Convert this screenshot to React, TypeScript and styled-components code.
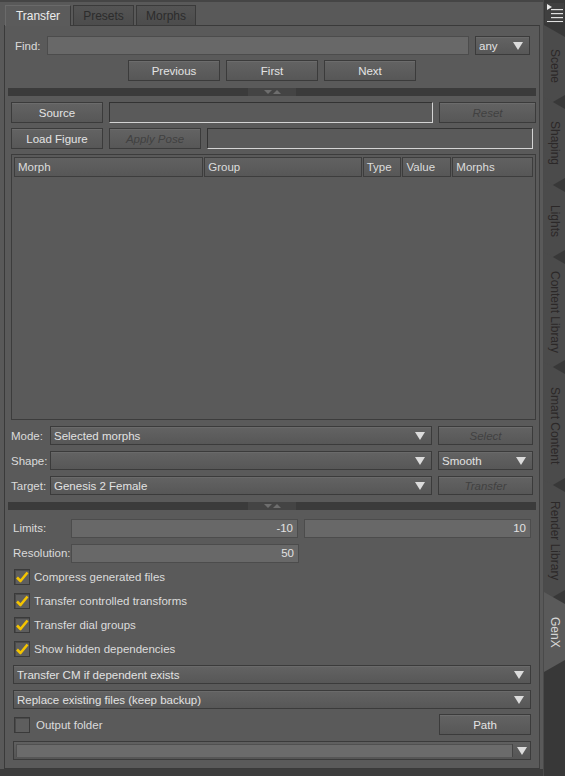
import type { FC } from 'react'
import styled, { createGlobalStyle, css } from 'styled-components'

const GlobalStyle = createGlobalStyle`
  html, body {
    margin: 0;
    padding: 0;
    background: #3c3c3c;
  }
  body {
    font-family: 'Liberation Sans', Arial, sans-serif;
    font-size: 11px;
    color: #dedede;
  }
`

const Frame = styled.div`
  display: flex;
  width: 565px;
  height: 776px;
  background: #3c3c3c;
  overflow: hidden;
`

const Main = styled.div`
  width: 543px;
  height: 769px;
  background: #595959;
  border-top: 2px solid #454545;
  box-sizing: border-box;
  padding: 3px 3px 0 4px;
  display: flex;
  flex-direction: column;
`

const TabBar = styled.div`
  display: flex;
  gap: 2px;
  padding-left: 1px;
  height: 20px;
  position: relative;
  z-index: 1;
`

const Tab = styled.div<{ $active?: boolean; $w: number }>`
  width: ${(p) => p.$w}px;
  height: 20px;
  box-sizing: border-box;
  display: flex;
  align-items: center;
  justify-content: center;
  font-size: 12px;
  border: 1px solid #3a3a3a;
  border-bottom: none;
  ${(p) =>
    p.$active
      ? css`
          background: #5b5b5b;
          color: #ececec;
          height: 21px;
          border-top-color: #6a6a6a;
          border-left-color: #6a6a6a;
        `
      : css`
          background: linear-gradient(#545454, #4c4c4c);
          color: #2c2c2c;
        `}
`

const Panel = styled.div`
  flex: 1;
  border: 1px solid #3a3a3a;
  border-right-color: #3f3f3f;
  background: #5a5a5a;
  display: flex;
  flex-direction: column;
  padding-top: 10px;
`

const Row = styled.div<{ $pl?: number; $pr?: number; $mt?: number; $h?: number }>`
  display: flex;
  align-items: center;
  gap: 6px;
  padding-left: ${(p) => p.$pl ?? 6}px;
  padding-right: ${(p) => p.$pr ?? 3}px;
  margin-top: ${(p) => p.$mt ?? 0}px;
  height: ${(p) => p.$h ?? 21}px;
`

const CenterRow = styled(Row)`
  justify-content: center;
`

const Label = styled.span<{ $w?: number; $grow?: boolean }>`
  color: #dadada;
  font-size: 11.5px;
  width: ${(p) => (p.$w ? `${p.$w}px` : 'auto')};
  flex: ${(p) => (p.$grow ? 1 : '0 0 auto')};
  white-space: nowrap;
`

const Input = styled.div<{ $w?: number; $align?: string }>`
  height: 19px;
  box-sizing: border-box;
  background: #686868;
  border: 1px solid #4c4c4c;
  ${(p) => (p.$w ? `width: ${p.$w}px;` : 'flex: 1;')}
  display: flex;
  align-items: center;
  justify-content: ${(p) => p.$align ?? 'flex-start'};
  padding: 0 4px;
  font-size: 11.5px;
  color: #e2e2e2;
`

const Sunken = styled.div<{ $w?: number }>`
  height: 21px;
  box-sizing: border-box;
  ${(p) => (p.$w ? `width: ${p.$w}px;` : 'flex: 1;')}
  background: #5a5a5a;
  border: 1px solid #333;
  border-right-color: #d4d4d4;
  border-bottom-color: #d4d4d4;
`

const Button = styled.div<{ $w?: number; $disabled?: boolean; $h?: number }>`
  width: ${(p) => p.$w ?? 92}px;
  height: ${(p) => p.$h ?? 21}px;
  flex-shrink: 0;
  box-sizing: border-box;
  border: 1px solid #3b3b3b;
  background: linear-gradient(#636363, #575757);
  box-shadow: inset 0 1px 0 #6c6c6c;
  display: flex;
  align-items: center;
  justify-content: center;
  font-size: 11.5px;
  color: ${(p) => (p.$disabled ? '#414141' : '#e4e4e4')};
  font-style: ${(p) => (p.$disabled ? 'italic' : 'normal')};
`

const Combo = styled.div<{ $w?: number; $h?: number }>`
  height: ${(p) => p.$h ?? 19}px;
  box-sizing: border-box;
  ${(p) => (p.$w ? `width: ${p.$w}px; flex-shrink: 0;` : 'flex: 1;')}
  border: 1px solid #3b3b3b;
  background: linear-gradient(#636363, #575757);
  box-shadow: inset 0 1px 0 #6a6a6a;
  display: flex;
  align-items: center;
  padding: 0 6px 0 3px;
  font-size: 11.5px;
  color: #e2e2e2;
`

const ComboText = styled.span`
  flex: 1;
  white-space: nowrap;
  overflow: hidden;
`

const Arrow = styled.span`
  width: 0;
  height: 0;
  border-left: 5px solid transparent;
  border-right: 5px solid transparent;
  border-top: 8px solid #dcdcdc;
  flex-shrink: 0;
`

const PathCombo = styled.div`
  flex: 1;
  height: 19px;
  box-sizing: border-box;
  border: 1px solid #3b3b3b;
  background: linear-gradient(#606060, #555);
  display: flex;
  align-items: stretch;
  padding: 2px 0 2px 2px;
`

const PathField = styled.div`
  flex: 1;
  background: #6b6b6b;
  border-top: 1px solid #505050;
  border-left: 1px solid #505050;
`

const PathArrowBox = styled.div`
  width: 17px;
  display: flex;
  align-items: center;
  justify-content: center;
  border-left: 1px solid #444;
`

const Splitter = styled.div<{ $mt: number }>`
  margin: ${(p) => p.$mt}px 3px 0 3px;
  height: 8px;
  background: #3b3b3b;
  display: flex;
  justify-content: center;
`

const Grip = styled.div`
  width: 48px;
  background: #444;
  display: flex;
  align-items: center;
  justify-content: center;
  gap: 1px;
`

const GripTri = styled.span<{ $up?: boolean }>`
  width: 0;
  height: 0;
  border-left: 4px solid transparent;
  border-right: 4px solid transparent;
  ${(p) => (p.$up ? 'border-bottom: 4px solid #6e6e6e;' : 'border-top: 4px solid #6e6e6e;')}
`

const Table = styled.div`
  margin: 5px 3px 0 6px;
  height: 266px;
  box-sizing: border-box;
  border: 1px solid #3c3c3c;
  background: #5a5a5a;
  padding: 2px;
`

const HeaderRow = styled.div`
  display: flex;
  height: 20px;
  gap: 1px;
`

const HeaderCell = styled.div<{ $w: number }>`
  width: ${(p) => p.$w}px;
  box-sizing: border-box;
  border: 1px solid #3d3d3d;
  background: linear-gradient(#616161, #575757);
  display: flex;
  align-items: center;
  padding-left: 3px;
  font-size: 11.5px;
  color: #dcdcdc;
`

const CheckList = styled.div`
  margin-top: 2px;
`

const CheckRow = styled.div`
  display: flex;
  align-items: center;
  gap: 4px;
  height: 24px;
  padding-left: 9px;
  font-size: 11.5px;
  color: #dcdcdc;
`

const Box = styled.span`
  width: 16px;
  height: 16px;
  flex-shrink: 0;
  box-sizing: border-box;
  border: 1px solid #3a3a3a;
  background: #5e5e5e;
  box-shadow: inset 1px 1px 0 #4a4a4a;
  display: flex;
  align-items: center;
  justify-content: center;
`

const Side = styled.div`
  width: 22px;
  display: flex;
  flex-direction: column;
  border-left: 1px solid #4a4a4a;
  box-sizing: border-box;
  background: #383838;
`

const MenuButton = styled.div`
  height: 20px;
  margin: 3px 1px 2px 1px;
  display: flex;
  align-items: center;
  justify-content: center;
  background: #3f3f3f;
`

const SideTab = styled.div<{ $h: number; $active?: boolean }>`
  height: ${(p) => p.$h + 10}px;
  margin-bottom: -10px;
  background: ${(p) => (p.$active ? '#5a5a5a' : '#4b4b4b')};
  clip-path: polygon(0 0, 100% 12px, 100% calc(100% - 12px), 0 100%);
  writing-mode: vertical-rl;
  display: flex;
  align-items: center;
  justify-content: center;
  font-size: 12px;
  color: ${(p) => (p.$active ? '#d6d6d6' : '#2b2828')};
  padding-left: 1px;
`

const SideFill = styled.div`
  flex: 1;
`

const Check: FC = () => (
  <svg width="14" height="14" viewBox="0 0 14 14">
    <path d="M2 7.5 L5.5 11 L12.5 2.5" fill="none" stroke="#f4c400" strokeWidth="2.6" strokeLinejoin="round" />
  </svg>
)

const MenuIcon: FC = () => (
  <svg width="18" height="18" viewBox="0 0 18 18">
    <path d="M1 0 L6 3 L1 6 Z" fill="#e8e8e8" />
    <rect x="5" y="5" width="12" height="1.2" fill="#e0e0e0" />
    <rect x="5" y="9" width="12" height="1.2" fill="#e0e0e0" />
    <rect x="5" y="13" width="12" height="1.2" fill="#e0e0e0" />
    <rect x="1" y="17" width="16" height="1" fill="#e0e0e0" />
  </svg>
)

const Split: FC<{ mt: number }> = ({ mt }) => (
  <Splitter $mt={mt}>
    <Grip>
      <GripTri />
      <GripTri $up />
    </Grip>
  </Splitter>
)

const checks = ['Compress generated files', 'Transfer controlled transforms', 'Transfer dial groups', 'Show hidden dependencies']

const sideTabs = [
  { label: 'Scene', h: 72 },
  { label: 'Shaping', h: 83 },
  { label: 'Lights', h: 72 },
  { label: 'Content Library', h: 110 },
  { label: 'Smart Content', h: 118 },
  { label: 'Render Library', h: 112 },
  { label: 'GenX', h: 70, active: true },
]

const App: FC = () => {
  return (
    <>
      <GlobalStyle />
      <Frame>
        <Main>
          <TabBar>
            <Tab $active $w={66}>
              Transfer
            </Tab>
            <Tab $w={61}>Presets</Tab>
            <Tab $w={60}>Morphs</Tab>
          </TabBar>
          <Panel>
            <Row $pl={10} $pr={9} $h={19}>
              <Label>Find:</Label>
              <Input />
              <Combo $w={55}>
                <ComboText>any</ComboText>
                <Arrow />
              </Combo>
            </Row>
            <CenterRow $mt={5} $pl={0} $pr={0}>
              <Button>Previous</Button>
              <Button>First</Button>
              <Button>Next</Button>
            </CenterRow>

            <Split mt={7} />

            <Row $mt={6}>
              <Button>Source</Button>
              <Sunken />
              <Button $w={97} $disabled>
                Reset
              </Button>
            </Row>
            <Row $mt={5} $pr={6}>
              <Button>Load Figure</Button>
              <Button $disabled>Apply Pose</Button>
              <Sunken />
            </Row>

            <Table>
              <HeaderRow>
                <HeaderCell $w={190}>Morph</HeaderCell>
                <HeaderCell $w={158}>Group</HeaderCell>
                <HeaderCell $w={39}>Type</HeaderCell>
                <HeaderCell $w={49}>Value</HeaderCell>
                <HeaderCell $w={81}>Morphs</HeaderCell>
              </HeaderRow>
            </Table>

            <Row $mt={6} $h={19} $pr={6}>
              <Label $w={33}>Mode:</Label>
              <Combo>
                <ComboText>Selected morphs</ComboText>
                <Arrow />
              </Combo>
              <Button $w={95} $h={19} $disabled>
                Select
              </Button>
            </Row>
            <Row $mt={6} $h={19} $pr={6}>
              <Label $w={33}>Shape:</Label>
              <Combo>
                <ComboText />
                <Arrow />
              </Combo>
              <Combo $w={95}>
                <ComboText>Smooth</ComboText>
                <Arrow />
              </Combo>
            </Row>
            <Row $mt={6} $h={19} $pr={6}>
              <Label $w={33}>Target:</Label>
              <Combo>
                <ComboText>Genesis 2 Female</ComboText>
                <Arrow />
              </Combo>
              <Button $w={95} $h={19} $disabled>
                Transfer
              </Button>
            </Row>

            <Split mt={7} />

            <Row $mt={8} $pl={8} $pr={8} $h={20}>
              <Label $w={52}>Limits:</Label>
              <Input $align="flex-end">-10</Input>
              <Input $align="flex-end">10</Input>
            </Row>
            <Row $mt={5} $pl={8} $pr={8} $h={20}>
              <Label $w={52}>Resolution:</Label>
              <Input $w={228} $align="flex-end">
                50
              </Input>
            </Row>

            <CheckList>
              {checks.map((c) => (
                <CheckRow key={c}>
                  <Box>
                    <Check />
                  </Box>
                  {c}
                </CheckRow>
              ))}
            </CheckList>

            <Row $mt={4} $pl={8} $pr={8} $h={19}>
              <Combo>
                <ComboText>Transfer CM if dependent exists</ComboText>
                <Arrow />
              </Combo>
            </Row>
            <Row $mt={6} $pl={8} $pr={8} $h={19}>
              <Combo>
                <ComboText>Replace existing files (keep backup)</ComboText>
                <Arrow />
              </Combo>
            </Row>
            <Row $mt={5} $pl={9} $pr={8}>
              <Box />
              <Label $grow>Output folder</Label>
              <Button>Path</Button>
            </Row>
            <Row $mt={6} $pl={8} $pr={8} $h={19}>
              <PathCombo>
                <PathField />
                <PathArrowBox>
                  <Arrow />
                </PathArrowBox>
              </PathCombo>
            </Row>
          </Panel>
        </Main>
        <Side>
          <MenuButton>
            <MenuIcon />
          </MenuButton>
          {sideTabs.map((t) => (
            <SideTab key={t.label} $h={t.h} $active={t.active}>
              {t.label}
            </SideTab>
          ))}
          <SideFill />
        </Side>
      </Frame>
    </>
  )
}

export default App
